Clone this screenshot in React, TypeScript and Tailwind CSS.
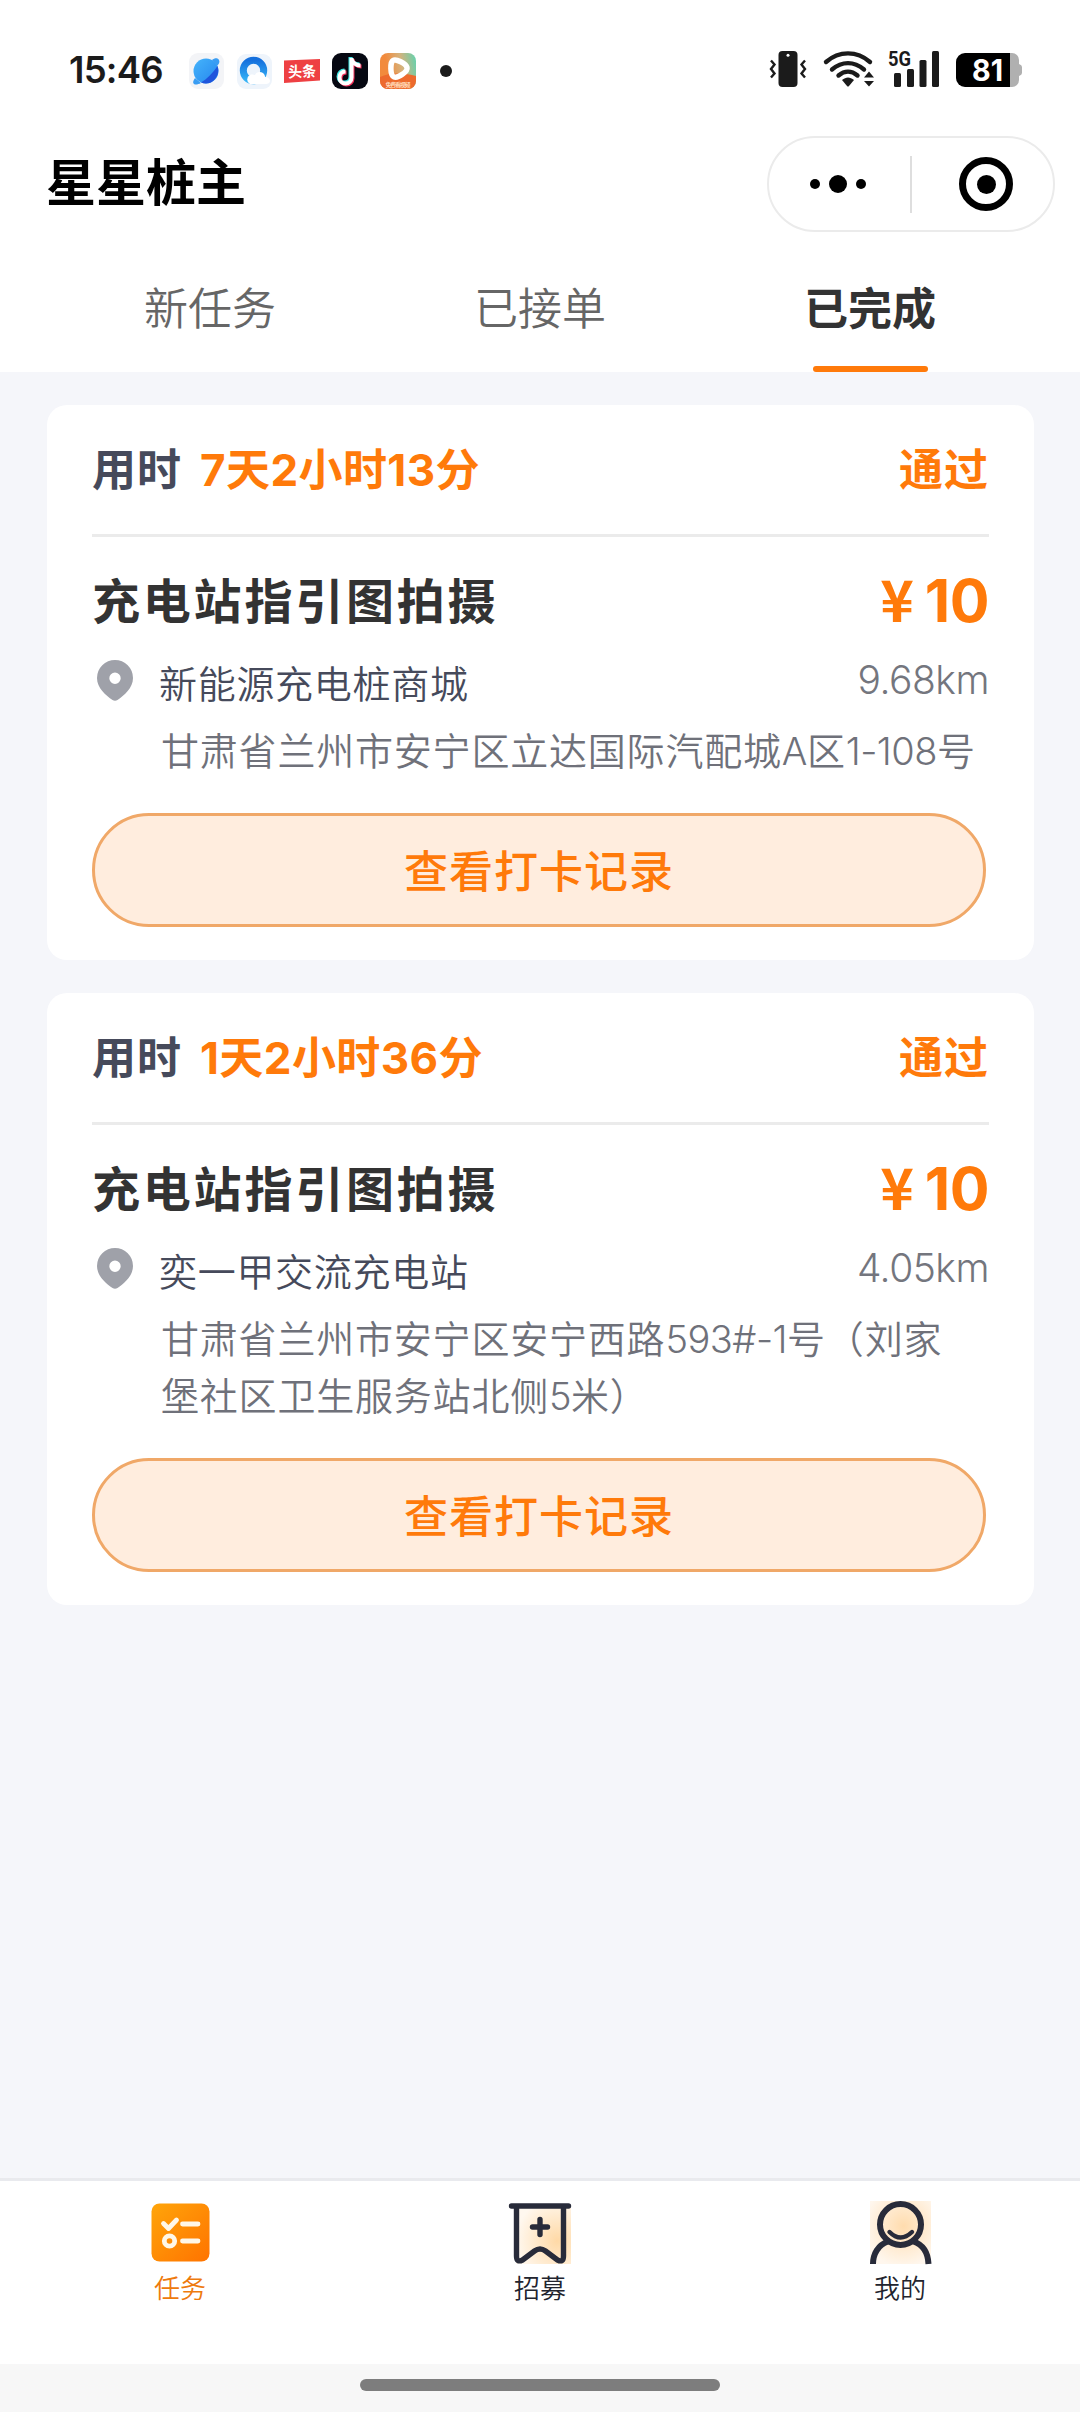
import React, { useState } from 'react';

interface Task {
  id: number;
  duration: string;
  status: string;
  title: string;
  price: number;
  place: string;
  distance: string;
  address: string[];
}

const TABS = ['新任务', '已接单', '已完成'];

const TASKS: Task[] = [
  {
    id: 1,
    duration: '7天2小时13分',
    status: '通过',
    title: '充电站指引图拍摄',
    price: 10,
    place: '新能源充电桩商城',
    distance: '9.68km',
    address: ['甘肃省兰州市安宁区立达国际汽配城A区1-108号'],
  },
  {
    id: 2,
    duration: '1天2小时36分',
    status: '通过',
    title: '充电站指引图拍摄',
    price: 10,
    place: '奕一甲交流充电站',
    distance: '4.05km',
    address: ['甘肃省兰州市安宁区安宁西路593#-1号（刘家', '堡社区卫生服务站北侧5米）'],
  },
];

const AppIcons = () => (
  <svg width="266" height="40" viewBox="187 51 266 40" className="shrink-0 overflow-visible">
    <defs>
      <linearGradient id="planet" x1="0" y1="0" x2="1" y2="1">
        <stop offset="0" stopColor="#45b4fb" />
        <stop offset="1" stopColor="#2586ee" />
      </linearGradient>
      <linearGradient id="ring" x1="0" y1="0" x2="0" y2="1">
        <stop offset="0" stopColor="#1570dd" />
        <stop offset="1" stopColor="#35b2f6" />
      </linearGradient>
      <linearGradient id="player" x1="0" y1="0.2" x2="1" y2="0">
        <stop offset="0.15" stopColor="#f28a3c" />
        <stop offset="0.55" stopColor="#d5b27c" />
        <stop offset="1" stopColor="#5fd3b0" />
      </linearGradient>
    </defs>
    {/* browser */}
    <rect x="189" y="53" width="35" height="36" rx="9" fill="#f3f4f7" />
    <circle cx="206" cy="71" r="12.500" fill="url(#planet)" />
    <path d="M212 60c3-2.500 6-2 7 0s0 4-2 6zM195 78c-2 3-2.500 5-1 6s4 .5 7-1z" fill="#3a9df3" />
    <path d="M217.500 66c2 6 0 11-4.500 15-4 3-8 3-12 1.500C207 79 213 73 217.500 66z" fill="#1f55dc" />
    {/* cloud browser */}
    <rect x="237" y="54" width="35" height="35" rx="9" fill="#eef4fb" />
    <circle cx="253.500" cy="70.500" r="10.200" fill="none" stroke="url(#ring)" strokeWidth="7" />
    <path d="M250 84a5 5 0 0 1 0-9c2-1 4 0 5 0 1-3 5-4 8-2 2 2 2 3 2 4 3 0 5 2 5 4s-2 3-4 3z" fill="#fff" />
    {/* news */}
    <path d="M284 60.500 320 59v21.500L284 83z" fill="#ee4043" />
    <text x="288" y="77" fontSize="15" fontWeight="700" fill="#fff" textLength="28" lengthAdjust="spacingAndGlyphs" fontFamily="'Noto Sans CJK SC', sans-serif" transform="rotate(-2 302 71)">头条</text>
    {/* short video */}
    <rect x="332" y="53" width="36" height="36" rx="9" fill="#060812" />
    <g fill="none" strokeWidth="4">
      <path d="M350.500 57v19.500a6 6 0 1 1-6-6M350.500 57c0 4 4 7.500 9 7.500" stroke="#3de8e6" />
      <path d="M352.500 59v19.500a6 6 0 1 1-6-6M352.500 59c0 4 4 7.500 9 7.500" stroke="#f5305a" />
      <path d="M351.500 58v19.500a6 6 0 1 1-6-6M351.500 58c0 4 4 7.500 9 7.500" stroke="#fff" />
    </g>
    {/* player */}
    <rect x="380" y="53" width="36" height="36" rx="8" fill="url(#player)" />
    <path d="M380 77c10-5 26-4 36-1v5a8 8 0 0 1-8 8h-20a8 8 0 0 1-8-8z" fill="#ed6a2d" />
    <path d="M393 60.500c3-2 13 3 14 7s-9 11-13 9.500-4-15-1-16.500z" fill="none" stroke="#fff" strokeWidth="5.500" strokeLinejoin="round" />
    <text x="385.500" y="86.500" fontSize="6" fontWeight="700" fill="#ffd9b8" textLength="25" fontFamily="'Noto Sans CJK SC', sans-serif">免费看视频</text>
    <circle cx="446" cy="71" r="6" fill="#1b1b1b" />
  </svg>
);

const SystemIcons = () => (
  <svg width="254" height="60" viewBox="769 42 254 60" fill="#1b1b1b" className="overflow-visible">
    {/* vibrate */}
    <rect x="778.500" y="52" width="19" height="36" rx="4" />
    <circle cx="788" cy="56.300" r="1.500" fill="#fff" />
    <path d="m771 61.500 3.500 4-3.500 4.500 3.500 4.500-3.500 4M805 61.500l-3.500 4 3.500 4.500-3.500 4.500 3.500 4" fill="none" stroke="#1b1b1b" strokeWidth="2.400" />
    {/* wifi */}
    <g fill="none" stroke="#1b1b1b" strokeWidth="4.400" strokeLinecap="round">
      <path d="M826 63c13-11.500 31-11.500 44 0" />
      <path d="M832 70.500c10-8.500 22-8.500 32 0" />
      <path d="M838.500 76.500c6-5 13-5 19 0" />
    </g>
    <path d="M842 81c4-3.500 8-3.500 12 0l-5 6q-1 1-2 0z" />
    <path d="m869 72.500 5 6h-10zM869 87.500l5-5.500h-10z" />
    {/* signal */}
    <text x="888" y="66.500" fontSize="20" fontWeight="700" textLength="23" lengthAdjust="spacingAndGlyphs" fontFamily="Roboto, sans-serif">5G</text>
    <rect x="894" y="74" width="7" height="14" rx="1.500" />
    <rect x="907" y="70" width="7" height="18" rx="1.500" />
    <rect x="919.500" y="61" width="7" height="27" rx="1.500" />
    <rect x="932" y="52" width="7" height="36" rx="1.500" />
    {/* battery */}
    <path d="M1010 54h2a7 7 0 0 1 7 7v4q3 1 3 3v6q0 2-3 3v4a7 7 0 0 1-7 7h-2z" fill="#b0b0b0" />
    <path d="M965 54h45v34h-45a9 9 0 0 1-9-9V63a9 9 0 0 1 9-9z" fill="#000" />
    <text x="972" y="82.300" fontSize="30" fontWeight="700" fill="#fff" textLength="31" lengthAdjust="spacingAndGlyphs" fontFamily="Inter, sans-serif">81</text>
  </svg>
);

const Capsule = () => (
  <div className="flex h-24 w-[288px] items-center rounded-full border-2 border-[#ebebeb]">
    <div className="flex w-[141px] items-center justify-center gap-[9px] pr-1">
      <span className="size-[10px] rounded-full bg-black" />
      <span className="size-[18px] rounded-full bg-black" />
      <span className="size-[10px] rounded-full bg-black" />
    </div>
    <div className="h-[57px] w-[2px] bg-[#dedede]" />
    <div className="flex flex-1 items-center justify-center pl-[7px]">
      <div className="flex size-[54px] items-center justify-center rounded-full border-[7px] border-black">
        <span className="size-[19px] rounded-full bg-black" />
      </div>
    </div>
  </div>
);

const PinIcon = () => (
  <svg width="36" height="41" viewBox="0 0 36 41">
    <path
      fillRule="evenodd"
      d="M18 0a18 18 0 0 1 18 18c0 10-9 17.500-15.500 22q-2.500 1.500-5 0C9 35.500 0 28 0 18A18 18 0 0 1 18 0zm0 12.500a5.700 5.700 0 1 0 0 11.400 5.700 5.700 0 0 0 0-11.400z"
      fill="#9fa1a9"
    />
  </svg>
);

// Latin runs are set tighter than the Chinese text around them
const AddressLine: React.FC<{ text: string }> = ({ text }) => (
  <p>
    {text.split(/([\w#-]+)/).map((part, i) =>
      i % 2 ? (
        <span key={i} className="tracking-[-0.5px]">{part}</span>
      ) : (
        part
      )
    )}
  </p>
);

const TaskCard: React.FC<{ task: Task }> = ({ task }) => (
  <div className="rounded-[20px] bg-white px-[45px] pb-[33px]">
    <div className="flex h-[132px] items-baseline justify-between border-b-[3px] border-[#ebebeb] pt-[30px] text-[44px] leading-[64px] font-bold">
      <div className="flex items-baseline">
        <span className="w-[108px] tracking-[1px] text-[#464a5b]">用时</span>
        <span className="font-['Inter','Noto_Sans_CJK_SC',sans-serif] tracking-[0.4px] text-[#ff7a0a]">{task.duration}</span>
      </div>
      <span className="tracking-[1px] text-[#ff7a0a]">{task.status}</span>
    </div>

    <div className="mt-[22px] flex h-[78px] items-center justify-between">
      <h2 className="text-[48px] font-bold tracking-[2.8px] text-[#333]">{task.title}</h2>
      <div className="flex items-baseline gap-[11px] pt-[2px] font-bold text-[#ff7a0a]">
        <span className="text-[57px] leading-[78px]">¥</span>
        <span className="font-['Inter',sans-serif] text-[59px] leading-[78px] tracking-[-0.5px]">{task.price}</span>
      </div>
    </div>

    <div className="mt-[21px] flex h-12 justify-between">
      <div className="flex">
        <div className="w-[67px] pt-[2px] pl-[5px]">
          <PinIcon />
        </div>
        <span className="text-[38px] leading-[48px] font-[350] tracking-[0.7px] text-[#464a5b]">{task.place}</span>
      </div>
      <span className="pt-[3px] font-['Inter',sans-serif] text-[39px] leading-[38px] font-[350] tracking-[-0.5px] text-[#74767e]">{task.distance}</span>
    </div>

    <div className="mt-[17px] mb-[33px] pl-[69px] font-['Inter','Noto_Sans_CJK_SC',sans-serif] text-[38px] leading-[57px] font-[350] tracking-[0.8px] whitespace-nowrap text-[#6f717a]">
      {task.address.map((line) => (
        <AddressLine key={line} text={line} />
      ))}
    </div>

    <button className="flex h-[114px] w-[894px] items-center justify-center rounded-full border-[3px] border-[#f0a868] bg-[#ffedde] pb-[2px] text-[44px] font-medium tracking-[1px] text-[#ff7a0a]">
      查看打卡记录
    </button>
  </div>
);

const TaskIcon = () => (
  <svg width="64" height="64" viewBox="0 0 64 64" fill="none">
    <defs>
      <linearGradient id="task" x1="0" y1="0" x2="1" y2="1">
        <stop offset="0" stopColor="#ffa50a" />
        <stop offset="1" stopColor="#ff7300" />
      </linearGradient>
    </defs>
    <rect x="3.500" y="2.500" width="58" height="58" rx="8" fill="url(#task)" />
    <g stroke="#fff7e8" strokeLinecap="round" strokeLinejoin="round" strokeWidth="4.800">
      <path d="m15.500 22.500 5 5 8-8.500M34.500 23H50M34.500 40H50" />
      <circle cx="21.500" cy="40" r="5.200" />
    </g>
  </svg>
);

const RecruitIcon = () => (
  <svg width="64" height="64" viewBox="0 0 64 64" fill="none">
    <defs>
      <radialGradient id="recruit" cx="0.75" cy="0.6" r="0.75">
        <stop offset="0" stopColor="#ffd9a6" />
        <stop offset="1" stopColor="#fff8ef" />
      </radialGradient>
    </defs>
    <rect x="8" y="5" width="55" height="58" fill="url(#recruit)" />
    <g stroke="#282b3a" strokeLinecap="round" strokeLinejoin="round" strokeWidth="5.400">
      <path d="M3.500 5h57M8.500 7v48q0 7 6 4l12-9q5.500-4 11 0l12 9q6 3 6-4V7M32 18.500v15M24.500 26h15" />
    </g>
  </svg>
);

const ProfileIcon = () => (
  <svg width="64" height="64" viewBox="0 0 64 64" fill="none">
    <defs>
      <radialGradient id="profile" cx="0.55" cy="0.4" r="0.65">
        <stop offset="0" stopColor="#ffdcae" />
        <stop offset="1" stopColor="#fff7ee" />
      </radialGradient>
    </defs>
    <rect x="2" y="0" width="61" height="63" fill="url(#profile)" />
    <g stroke="#282b3a" strokeLinecap="round" strokeWidth="6">
      <circle cx="32.500" cy="23.500" r="20.500" />
      <path d="M21.500 31q11 11 22.500 0" strokeWidth="4.400" />
      <path d="M20 40.500C10 44 5 53 5 63M45.500 40.500C56 44 60 53 60.500 63" strokeLinecap="butt" />
    </g>
  </svg>
);

const NAV = [
  { label: '任务', icon: TaskIcon },
  { label: '招募', icon: RecruitIcon },
  { label: '我的', icon: ProfileIcon },
];

const App = () => {
  const [tab, setTab] = useState(2);
  const [page, setPage] = useState(0);

  return (
    <div className="flex h-[2412px] w-[1080px] flex-col overflow-hidden bg-[#f5f6fa] font-['Noto_Sans_CJK_SC',sans-serif]">
      <header className="bg-white">
        <div className="flex h-[136px] items-center pt-[6px] pr-[57px] pl-[69px]">
          <span className="w-[118px] pb-[2px] font-['Inter',sans-serif] text-[36.5px] font-semibold tracking-[-0.8px] text-[#1b1b1b]">15:46</span>
          <AppIcons />
          <div className="ml-auto">
            <SystemIcons />
          </div>
        </div>

        <div className="flex h-24 items-center justify-between pr-[25px] pl-[46px]">
          <h1 className="pb-[10px] text-[50px] font-bold text-black">星星桩主</h1>
          <Capsule />
        </div>

        <nav className="flex h-[140px] px-[45px]">
          {TABS.map((name, i) => (
            <button key={name} onClick={() => setTab(i)} className="flex flex-1 flex-col items-center pt-[44px]">
              <span className={`text-[44px] leading-[60px] ${tab === i ? 'font-bold text-[#333]' : 'font-[350] text-[#666]'}`}>{name}</span>
              {tab === i && <span className="mt-auto h-[6px] w-[115px] rounded-[3px] bg-[#ff7a0a]" />}
            </button>
          ))}
        </nav>
      </header>

      <main className="flex flex-1 flex-col gap-[33px] pt-[33px] pr-[46px] pl-[47px]">
        {TASKS.map((task) => (
          <TaskCard key={task.id} task={task} />
        ))}
      </main>

      <footer>
        <nav className="flex h-[186px] border-t-[3px] border-[#e9eaee] bg-white">
          {NAV.map(({ label, icon: Icon }, i) => (
            <button key={label} onClick={() => setPage(i)} className="flex w-[360px] flex-col items-center pt-5">
              <Icon />
              <span className={`mt-1 text-[26px] leading-9 font-[350] ${page === i ? 'text-[#ee7a0d]' : 'text-[#22242e]'}`}>{label}</span>
            </button>
          ))}
        </nav>
        <div className="flex h-12 justify-center bg-[#f7f7f7] pt-[15px]">
          <div className="h-3 w-[360px] rounded-full bg-[#7d7d7d]" />
        </div>
      </footer>
    </div>
  );
};

export default App;
